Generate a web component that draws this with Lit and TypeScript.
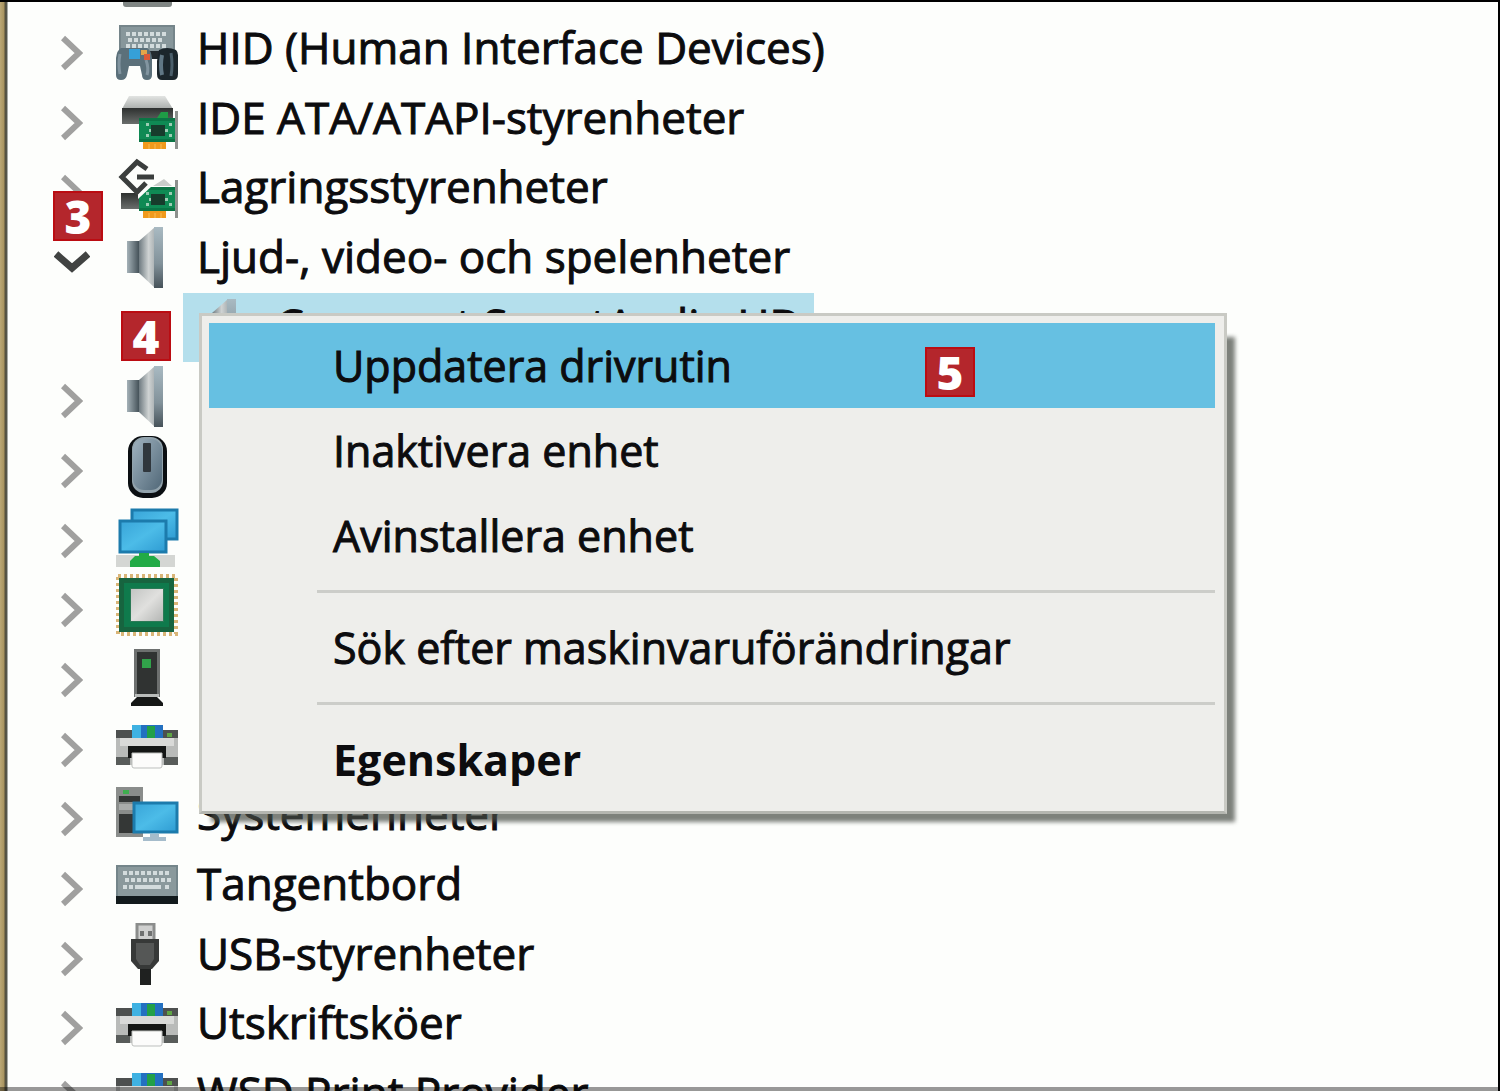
import { LitElement, html, css, svg, nothing, type SVGTemplateResult, type TemplateResult } from "lit";
import { customElement, property, state } from "lit/decorators.js";

type IconName =
  | "display" | "hid" | "ide" | "storage" | "speaker" | "mouse" | "network"
  | "cpu" | "tower" | "printer" | "system" | "keyboard" | "usb";

interface Device {
  icon: IconName;
  label?: string;
  badge?: string;
  open?: boolean;
  child?: boolean;
}

const DEVICES: Device[] = [
  { icon: "display" },
  { icon: "hid", label: "HID (Human Interface Devices)" },
  { icon: "ide", label: "IDE ATA/ATAPI-styrenheter" },
  { icon: "storage", label: "Lagringsstyrenheter" },
  { icon: "speaker", label: "Ljud-, video- och spelenheter", badge: "3", open: true },
  { icon: "speaker", label: "Conexant SmartAudio HD", badge: "4", child: true },
  { icon: "speaker" },
  { icon: "mouse" },
  { icon: "network" },
  { icon: "cpu" },
  { icon: "tower" },
  { icon: "printer" },
  { icon: "system", label: "Systemenheter" },
  { icon: "keyboard", label: "Tangentbord" },
  { icon: "usb", label: "USB-styrenheter" },
  { icon: "printer", label: "Utskriftsköer" },
  { icon: "printer", label: "WSD Print Provider" },
];

const card = svg`
  <rect x="60" y="24" width="3" height="38" fill="#8d918e"/>
  <rect x="24" y="31" width="36" height="24" fill="#0f8a54"/>
  <path d="M24 31h36v3H24zM24 52h36v3H24z" fill="#0b7545"/>
  <rect x="36" y="38" width="14" height="11" fill="#173c2c"/>
  <path d="M31 36h3v3h-3zM54 36h3v3h-3zM31 47h3v3h-3zM54 47h3v3h-3zM34 42h2v3h-2zM50 42h3v3h-3z" fill="#9ccdb4"/>
  <rect x="28" y="55" width="23" height="7" fill="#f09a1c"/>
  <path d="M34 57v5M40 57v5M46 57v5" stroke="#f8bd55" stroke-width="1"/>`;

const keys = (x: number, y: number, n: number) =>
  Array.from({ length: n }, (_, i) => svg`<rect x=${x + i * 6} y=${y} width="4" height="4" fill="#d3dcdd"/>`);

const ICONS: Record<IconName, SVGTemplateResult> = {
  display: svg`<rect x="8" y="50" width="49" height="10" rx="3" fill="#7f8583"/>`,
  hid: svg`
    <rect x="5" y="9" width="54" height="32" fill="#87979b" stroke="#75858a" stroke-width="2"/>
    ${keys(11, 15, 7)}${keys(13, 21, 6)}${keys(11, 27, 7)}
    <path d="M34 34h10v8H34z" fill="#232b2e"/>
    <path d="M44 33q8-4 17 0q2 2 2 5v19q0 6-5 6H47q-5 0-5-6V44z" fill="#1b262c"/>
    <path d="M47 38q-2 10 0 20" stroke="#607785" stroke-width="4" fill="none"/>
    <path d="M56 36q2 12 0 23" stroke="#4a5e6a" stroke-width="3" fill="none"/>
    <path d="M6 31h26q4 2 5 10v17q0 5-5 5t-5-5l-2-9H14l-2 9q-1 5-6 5t-5-5V41q1-8 5-10z" fill="#5b707a"/>
    <path d="M5 37q-2 10 0 20M31 43q3 8 1 15" stroke="#8295a0" stroke-width="3" fill="none"/>
    <rect x="14" y="32" width="11" height="10" fill="#36a0d8"/>
    <rect x="26" y="33" width="6" height="5" fill="#e2a64a"/>
    <rect x="29" y="37" width="6" height="6" fill="#dc5a38"/>`,
  ide: svg`
    <path d="M14 9h36l8 13H7z" fill="url(#silver)"/>
    <rect x="7" y="21" width="51" height="16" fill="url(#dark)"/>
    <path d="M42 31l4-6h7v6z" fill="#1f9c46"/>${card}`,
  storage: svg`
    <path d="M6 37h22v16H6z" fill="url(#dark)"/>
    ${card}
    <path d="M23 30h14L23 43z" fill="#fdfefc"/>
    <path d="M38 30l11-7 8 7z" fill="#c9cdca"/>
    <path d="M22 5L36 18 22 35 5 21z" fill="#fdfefc" stroke="#fdfefc" stroke-width="5"/>
    <path d="M32 13L22 6 7 21 22 36 31 27" fill="none" stroke="#3b3e3d" stroke-width="5"/>
    <path d="M22 21h17" stroke="#3b3e3d" stroke-width="5"/>`,
  speaker: svg`
    <rect x="12" y="15" width="13" height="32" fill="url(#magnet)"/>
    <path d="M24 15L40 1v61L24 47z" fill="url(#cone)"/>
    <path d="M39 1h9v61h-9z" fill="url(#rim)"/>`,
  mouse: svg`
    <rect x="13" y="1" width="39" height="62" rx="15" fill="#0b0f12"/>
    <rect x="17" y="2" width="31" height="56" rx="12" fill="#92a3ac"/>
    <rect x="18" y="4" width="29" height="51" rx="11" fill="url(#mouse)"/>
    <rect x="28" y="8" width="8" height="29" rx="1" fill="#30373d"/>`,
  network: svg`
    <rect x="17" y="5" width="45" height="29" fill="url(#screen)" stroke="#1c7bac" stroke-width="3"/>
    <rect x="1" y="50" width="59" height="12" fill="#d4d6d3"/>
    <rect x="5" y="16" width="46" height="31" fill="url(#screen)" stroke="#1c7bac" stroke-width="3"/>
    <path d="M24 48h10v3h5l6 5v6H15v-6l5-5h4z" fill="#22ab46"/>`,
  cpu: svg`
    <rect x="3" y="2" width="58" height="58" fill="none" stroke="#d9b577" stroke-width="4" stroke-dasharray="3 3"/>
    <rect x="4" y="4" width="55" height="54" fill="#17643f"/>
    <rect x="9" y="9" width="45" height="44" fill="#0f7a4c"/>
    <rect x="15" y="14" width="34" height="34" fill="#2b7a56"/>
    <rect x="16" y="15" width="32" height="32" fill="url(#chip)"/>`,
  tower: svg`
    <rect x="19" y="5" width="26" height="48" fill="#303332"/>
    <path d="M19 5h26v3H19zM19 5h3v48h-3zM42 5h3v48h-3z" fill="#6d706f"/>
    <rect x="27" y="15" width="9" height="9" fill="#31a24a"/>
    <path d="M20 50h24v3H20z" fill="#b9bcba"/>
    <path d="M22 53h20l6 6v3H16v-3z" fill="#151716"/>`,
  printer: svg`
    <rect x="1" y="16" width="62" height="35" fill="#b9bbb9"/>
    <path d="M1 16h62v8H1z" fill="#4d504f"/>
    <path d="M1 43h14v8H1zM49 43h14v8H49z" fill="#585c5a"/>
    <path d="M5 24h54v8H5z" fill="#d9dad8"/>
    <rect x="17" y="11" width="31" height="13" fill="#2370c0"/>
    <rect x="17" y="11" width="9" height="13" fill="#3fb2e2"/>
    <rect x="32" y="12" width="8" height="12" fill="#22a048"/>
    <rect x="52" y="19" width="5" height="4" fill="#5fa544"/>
    <rect x="13" y="32" width="38" height="12" fill="#141615"/>
    <path d="M17 39h30v13q0 2-2 2H19q-2 0-2-2z" fill="#fcfcfb" stroke="#bdbfbd" stroke-width="1"/>`,
  system: svg`
    <rect x="1" y="4" width="27" height="50" fill="#8a8d8b"/>
    <path d="M4 13h21v6H4zM4 31h21v19H4z" fill="#343736"/>
    <path d="M4 21h21v6H4z" fill="#a9acaa"/>
    <rect x="8" y="7" width="6" height="4" fill="#3fae4f"/>
    <rect x="19" y="20" width="43" height="29" fill="url(#screen)" stroke="#1c7bac" stroke-width="3"/>
    <path d="M35 51h9v3h7v4H28v-4h7z" fill="#a5bccb"/>`,
  keyboard: svg`
    <rect x="2" y="13" width="60" height="32" fill="#8a999c" stroke="#74858a" stroke-width="2"/>
    ${keys(8, 18, 8)}${keys(10, 25, 8)}${keys(8, 32, 2)}${keys(50, 32, 1)}
    <rect x="20" y="32" width="26" height="4" fill="#d3dcdd"/>
    <rect x="1" y="43" width="62" height="8" fill="#121a1c"/>`,
  usb: svg`
    <rect x="22" y="1" width="17" height="17" fill="#cfd0cf" stroke="#8b8d8c" stroke-width="3"/>
    <path d="M25 8h4v5h-4zM33 8h4v5h-4z" fill="#6f7170"/>
    <path d="M16 16h28v22l-7 8H23l-7-8z" fill="#373938"/>
    <path d="M21 20h18v16l-4 6H25l-4-6z" fill="#555756"/>
    <rect x="25" y="46" width="11" height="16" fill="#1f2120"/>`,
};

const gradients = svg`
  <defs>
    <linearGradient id="silver" x2="0" y2="1"><stop stop-color="#e2e4e2"/><stop offset="1" stop-color="#a9adab"/></linearGradient>
    <linearGradient id="dark" x2="0" y2="1"><stop stop-color="#2d302f"/><stop offset="1" stop-color="#6a6e6c"/></linearGradient>
    <linearGradient id="magnet"><stop stop-color="#a5b2b8"/><stop offset="1" stop-color="#3d4a51"/></linearGradient>
    <linearGradient id="cone"><stop stop-color="#6e7a80"/><stop offset=".6" stop-color="#cfd3d3"/><stop offset="1" stop-color="#a9b0b2"/></linearGradient>
    <linearGradient id="rim" x2="0" y2="1"><stop stop-color="#a9bac2"/><stop offset=".6" stop-color="#82929a"/><stop offset="1" stop-color="#465259"/></linearGradient>
    <linearGradient id="mouse" x2="1" y2="1"><stop stop-color="#9fb2bf"/><stop offset="1" stop-color="#516878"/></linearGradient>
    <linearGradient id="screen" x2="1" y2="1"><stop stop-color="#38a4d8"/><stop offset=".5" stop-color="#4cbce8"/><stop offset="1" stop-color="#2e9bd2"/></linearGradient>
    <linearGradient id="chip" x2="1" y2="1"><stop stop-color="#c3c5c3"/><stop offset=".5" stop-color="#e0e0de"/><stop offset="1" stop-color="#b4b6b4"/></linearGradient>
  </defs>`;

@customElement("device-icon")
export class DeviceIcon extends LitElement {
  static styles = css`
    :host { display: block; flex: none; width: 64px; height: 64px; }
    .art { display: block; width: 100%; height: 100%; }
  `;
  @property() name: IconName = "speaker";
  render(): TemplateResult {
    return html`<svg class="art" viewBox="0 0 64 64" aria-hidden="true">${gradients}${ICONS[this.name]}</svg>`;
  }
}

@customElement("step-badge")
export class StepBadge extends LitElement {
  static styles = css`
    :host {
      display: grid;
      place-items: center;
      box-sizing: border-box;
      width: 50px;
      height: 50px;
      border: 2px solid #bb0c12;
      background: #b4262c;
      color: #fff;
      font: 800 46px/46px "Open Sans", "Noto Sans", sans-serif;
    }
  `;
  render(): TemplateResult {
    return html`<slot></slot>`;
  }
}

@customElement("context-menu")
export class ContextMenu extends LitElement {
  static styles = css`
    :host { display: block; isolation: isolate; }
    .shadow {
      position: absolute;
      z-index: -1;
      inset: 24px -8px -8px 12px;
      background: rgba(70, 76, 68, 0.7);
      filter: blur(2px);
    }
    .menu {
      display: flex;
      flex-direction: column;
      padding: 7px 9px 9px 7px;
      border: 3px solid #c9cac4;
      border-bottom-color: #b4b6b0;
      background: #eeeeeb;
    }
    .item {
      position: relative;
      height: 85px;
      padding: 0 0 0 124px;
      border: 0;
      background: transparent;
      color: #0c0c0e;
      font: inherit;
      font-size: 43px;
      line-height: 83px;
      text-align: left;
      white-space: nowrap;
      -webkit-text-stroke: 1px #0c0c0e;
    }
    .active { background: #66c0e2; }
    .strong { font-weight: 700; -webkit-text-stroke: 0; }
    .line {
      height: 3px;
      margin: 12px 0 12px 108px;
      border: 0;
      background: #cccdc9;
    }
    .badge { position: absolute; top: 24px; right: 240px; -webkit-text-stroke: 0; }
  `;
  render(): TemplateResult {
    return html`
      <div class="shadow"></div>
      <div class="menu" role="menu">
        <button class="item active" role="menuitem">Uppdatera drivrutin<step-badge class="badge">5</step-badge></button>
        <button class="item" role="menuitem">Inaktivera enhet</button>
        <button class="item" role="menuitem">Avinstallera enhet</button>
        <hr class="line" />
        <button class="item" role="menuitem">Sök efter maskinvaruförändringar</button>
        <hr class="line" />
        <button class="item strong" role="menuitem">Egenskaper</button>
      </div>`;
  }
}

@customElement("app-root")
export class AppRoot extends LitElement {
  static styles = css`
    :host {
      display: block;
      position: relative;
      box-sizing: border-box;
      height: 100vh;
      overflow: hidden;
      border-top: 2px solid #000;
      border-right: 2px solid #000;
      background: linear-gradient(to right, #bba876 0, #a8945f 4px, #55503c 5px, #55584f 7px, #fdfefc 8px);
      color: #0c0c0e;
      font: 44px/64px "Open Sans", "Noto Sans", sans-serif;
    }
    .edge {
      position: absolute;
      inset: auto 0 0 0;
      height: 4px;
      background: rgba(0, 0, 0, 0.4);
    }
    .tree {
      margin: -58px 0 0;
      padding: 0 0 0 47px;
      list-style: none;
    }
    .row {
      position: relative;
      display: flex;
      align-items: center;
      height: 70px;
    }
    .row:nth-child(3n) { height: 69px; }
    .toggle {
      display: grid;
      place-items: center;
      flex: none;
      width: 50px;
      height: 64px;
      margin-right: 18px;
      padding: 8px 0 0;
      border: 0;
      background: none;
    }
    .chevron { display: block; fill: none; stroke: #a0a09f; stroke-width: 6; }
    .chevron-open { stroke: #414342; stroke-width: 7; }
    .label {
      padding: 0 12px 4px 18px;
      white-space: nowrap;
      -webkit-text-stroke: 1px #0c0c0e;
    }
    .child {
      display: flex;
      align-items: flex-end;
      height: 100%;
      margin-left: 136px;
      padding-left: 5px;
      background: #b4dfec;
    }
    .child .label { padding: 0 12px 6px 24px; }
    .badge { position: absolute; z-index: 1; }
    .badge-group { top: -32px; left: 6px; }
    .badge-child { top: 18px; left: 74px; }
    .popup {
      position: absolute;
      z-index: 2;
      top: 20px;
      left: 152px;
      width: 1028px;
    }
  `;

  @state() private devices: Device[] = DEVICES;

  private chevron(open?: boolean): TemplateResult {
    return open
      ? html`<svg class="chevron chevron-open" width="36" height="22" viewBox="0 0 36 22"><path d="M2 3L18 17 34 3"/></svg>`
      : html`<svg class="chevron" width="22" height="36" viewBox="0 0 22 36"><path d="M2 3L18 18 2 33"/></svg>`;
  }

  private row(d: Device): TemplateResult {
    if (d.child) {
      return html`
        <li class="row" role="treeitem" aria-selected="true">
          <div class="child"><device-icon name=${d.icon}></device-icon><span class="label">${d.label}</span></div>
          <step-badge class="badge badge-child">${d.badge}</step-badge>
          <context-menu class="popup"></context-menu>
        </li>`;
    }
    return html`
      <li class="row" role="treeitem" aria-expanded=${d.open ? "true" : "false"}>
        <button class="toggle" aria-label=${d.open ? "Dölj" : "Visa"}>${this.chevron(d.open)}</button>
        <device-icon name=${d.icon}></device-icon>
        ${d.label ? html`<span class="label">${d.label}</span>` : nothing}
        ${d.badge ? html`<step-badge class="badge badge-group">${d.badge}</step-badge>` : nothing}
      </li>`;
  }

  render(): TemplateResult {
    return html`
      <ul class="tree" role="tree">${this.devices.map((d) => this.row(d))}</ul>
      <div class="edge"></div>`;
  }
}
